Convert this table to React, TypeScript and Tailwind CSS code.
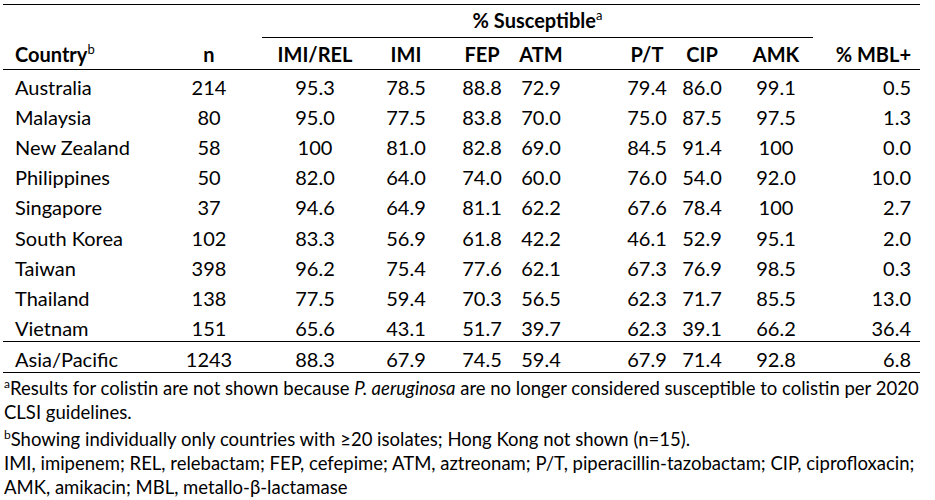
import React from 'react';

const cols = "grid grid-cols-[159px_100px_100px_83px_69px_82px_79px_64px_74px_107px]";

const align = [
  "justify-start pl-3",
  "justify-center pr-1.5",
  "justify-center pl-1.5",
  "justify-center pl-[5px]",
  "justify-center pl-[5px]",
  "justify-center pr-[28px]",
  "justify-center pl-[23px]",
  "justify-center pr-[10px]",
  "justify-center",
  "justify-end pr-[9px]",
];

const rows: string[][] = [
  ["Australia", "214", "95.3", "78.5", "88.8", "72.9", "79.4", "86.0", "99.1", "0.5"],
  ["Malaysia", "80", "95.0", "77.5", "83.8", "70.0", "75.0", "87.5", "97.5", "1.3"],
  ["New Zealand", "58", "100", "81.0", "82.8", "69.0", "84.5", "91.4", "100", "0.0"],
  ["Philippines", "50", "82.0", "64.0", "74.0", "60.0", "76.0", "54.0", "92.0", "10.0"],
  ["Singapore", "37", "94.6", "64.9", "81.1", "62.2", "67.6", "78.4", "100", "2.7"],
  ["South Korea", "102", "83.3", "56.9", "61.8", "42.2", "46.1", "52.9", "95.1", "2.0"],
  ["Taiwan", "398", "96.2", "75.4", "77.6", "62.1", "67.3", "76.9", "98.5", "0.3"],
  ["Thailand", "138", "77.5", "59.4", "70.3", "56.5", "62.3", "71.7", "85.5", "13.0"],
  ["Vietnam", "151", "65.6", "43.1", "51.7", "39.7", "62.3", "39.1", "66.2", "36.4"],
];

const total = ["Asia/Pacific", "1243", "88.3", "67.9", "74.5", "59.4", "67.9", "71.4", "92.8", "6.8"];

const headers = ["IMI/REL", "IMI", "FEP", "ATM", "P/T", "CIP", "AMK", "% MBL+"];

const Row: React.FC<{ cells: string[]; className?: string }> = ({ cells, className }) => (
  <div className={`${cols} ${className ?? ""}`}>
    {cells.map((c, i) => (
      <div key={i} className={`flex items-center pt-0.5 whitespace-nowrap ${align[i]}`}>
        {c}
      </div>
    ))}
  </div>
);

export default function App() {
  return (
    <div className="w-[935px] h-[500px] bg-white text-black overflow-hidden font-['Lato','Open_Sans',sans-serif]">
      <div className="ml-[3px] w-[917px] mt-1 border-t border-black text-[20px]">
        {/* super header */}
        <div className={`${cols} h-[33px]`}>
          <div className="col-start-3 col-span-7 border-b border-black flex items-end justify-center pb-0.5 font-bold whitespace-nowrap">
            <span>
              % Susceptible<sup className="text-[13px] top-[-8px] font-normal">a</sup>
            </span>
          </div>
        </div>

        {/* header */}
        <div className={`${cols} h-[32px] border-b border-black font-bold`}>
          <div className={`flex items-center whitespace-nowrap ${align[0]}`}>
            <span>
              Country<sup className="text-[13px] top-[-8px] font-normal">b</sup>
            </span>
          </div>
          <div className={`flex items-center ${align[1]}`}>n</div>
          {headers.map((h, i) => (
            <div key={h} className={`flex items-center whitespace-nowrap ${align[i + 2]}`}>
              {h}
            </div>
          ))}
        </div>

        {/* body */}
        <div className="grid grid-rows-9 h-[271px]">
          {rows.map((r) => (
            <Row key={r[0]} cells={r} />
          ))}
        </div>

        <Row cells={total} className="h-[32px] border-y border-black" />
      </div>

      {/* footnotes */}
      <div className="pl-1 pt-[3px] text-[18.5px] leading-[24px] whitespace-nowrap">
        <p>
          <sup className="text-[12px] top-[-7px]">a</sup>Results for colistin are not shown because{" "}
          <i>P. aeruginosa</i> are no longer considered susceptible to colistin per 2020
          <br />
          CLSI guidelines.
        </p>
        <p className="mt-[3px]">
          <sup className="text-[12px] top-[-7px]">b</sup>Showing individually only countries with ≥20 isolates; Hong
          Kong not shown (n=15).
        </p>
        <p>
          IMI, imipenem; REL, relebactam; FEP, cefepime; ATM, aztreonam; P/T, piperacillin-tazobactam; CIP,
          ciprofloxacin;
          <br />
          AMK, amikacin; MBL, metallo-β-lactamase
        </p>
      </div>
    </div>
  );
}
